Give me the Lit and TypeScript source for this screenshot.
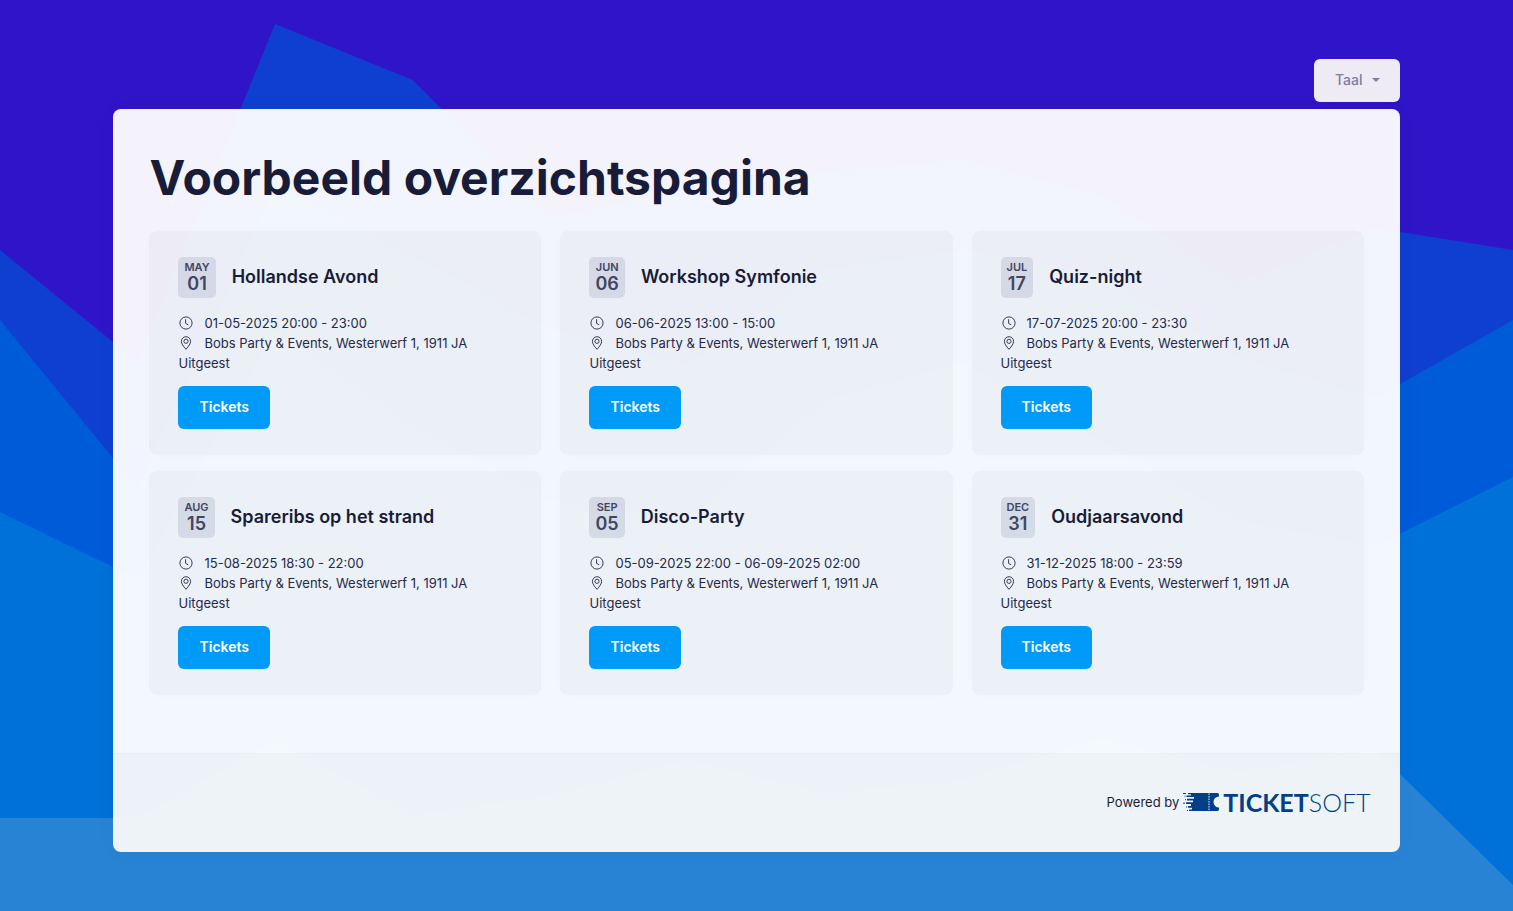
import { LitElement, html, css, svg } from "lit";
import { customElement, property } from "lit/decorators.js";

interface TicketEvent {
  month: string;
  day: string;
  title: string;
  time: string;
}

const LOCATION = "Bobs Party & Events, Westerwerf 1, 1911 JA Uitgeest";

const EVENTS: TicketEvent[] = [
  { month: "MAY", day: "01", title: "Hollandse Avond", time: "01-05-2025 20:00 - 23:00" },
  { month: "JUN", day: "06", title: "Workshop Symfonie", time: "06-06-2025 13:00 - 15:00" },
  { month: "JUL", day: "17", title: "Quiz-night", time: "17-07-2025 20:00 - 23:30" },
  { month: "AUG", day: "15", title: "Spareribs op het strand", time: "15-08-2025 18:30 - 22:00" },
  { month: "SEP", day: "05", title: "Disco-Party", time: "05-09-2025 22:00 - 06-09-2025 02:00" },
  { month: "DEC", day: "31", title: "Oudjaarsavond", time: "31-12-2025 18:00 - 23:59" },
];

// Height of each mountain layer at twelve evenly spaced columns.
const PEAKS: { fill: string; ys: number[] }[] = [
  { fill: "#0f3fd0", ys: [250, 362, 24, 80, 217, 190, 172, 160, 195, 283, 228, 250] },
  { fill: "#005bd8", ys: [320, 488, 185, 255, 330, 365, 270, 250, 275, 357, 398, 320] },
  { fill: "#0071d8", ys: [512, 579, 330, 425, 500, 520, 400, 362, 440, 520, 546, 477] },
  { fill: "#2983d4", ys: [818, 818, 740, 815, 795, 760, 793, 780, 738, 772, 750, 885] },
];

@customElement("event-card")
export class EventCard extends LitElement {
  @property({ attribute: false }) event!: TicketEvent;

  static styles = css`
    :host {
      display: block;
      padding: 26px 29px;
      border-radius: 8px;
      background: rgba(24, 20, 20, 0.03);
      box-shadow: 0 0 20px rgba(24, 28, 56, 0.01);
    }
    .head {
      display: flex;
      align-items: center;
      gap: 16px;
      margin-bottom: 15px;
    }
    .date {
      display: flex;
      flex-direction: column;
      align-items: center;
      height: 41px;
      box-sizing: border-box;
      padding: 3px 6px 0;
      border-radius: 5px;
      background: rgba(24, 28, 90, 0.1);
      color: #414560;
      font-weight: 600;
    }
    .month {
      font-size: 11px;
      line-height: 15px;
    }
    .day {
      font-size: 18px;
      line-height: 18px;
    }
    .title {
      margin: 0;
      padding-bottom: 2px;
      font-size: 18px;
      line-height: 24px;
      font-weight: 600;
      color: #181c38;
    }
    .line {
      margin: 0;
      font-size: 13px;
      line-height: 20px;
      color: #25294a;
    }
    .icon {
      width: 16px;
      height: 14px;
      margin-right: 10px;
      vertical-align: -2px;
      stroke-width: 0.9;
    }
    .tickets {
      display: inline-block;
      margin-top: 13px;
      padding: 0 21px 1px;
      border-radius: 6px;
      background: #009bf8;
      color: #fff;
      font-size: 14px;
      line-height: 42px;
      font-weight: 600;
      text-decoration: none;
      vertical-align: top;
    }
  `;

  render() {
    const e = this.event;
    return html`
      <div class="head">
        <div class="date"><span class="month">${e.month}</span><span class="day">${e.day}</span></div>
        <h2 class="title">${e.title}</h2>
      </div>
      <p class="line"><svg class="icon" viewBox="0 0 16 14" fill="none" stroke="currentColor" aria-hidden="true"><circle cx="8" cy="7" r="6.1" /><path d="M7.6 3.2v4.2l2.6 1.4" /></svg>${e.time}</p>
      <p class="line"><svg class="icon" viewBox="0 0 16 14" fill="none" stroke="currentColor" aria-hidden="true"><path d="M8 13.3C5.2 10.2 3.4 7.6 3.4 5.3a4.6 4.6 0 0 1 9.2 0C12.6 7.6 10.8 10.2 8 13.3z" /><circle cx="8" cy="5.3" r="2.1" /></svg>${LOCATION}</p>
      <a class="tickets" href="#tickets">Tickets</a>
    `;
  }
}

@customElement("app-root")
export class AppRoot extends LitElement {
  static styles = css`
    :host {
      display: block;
      position: relative;
      min-height: 100vh;
      box-sizing: border-box;
      padding: 59px 0;
      background: #3015c8;
      font-family: Inter, "Noto Sans", sans-serif;
      color: #181c38;
    }
    .backdrop {
      position: absolute;
      inset: 0;
      width: 100%;
      height: 100%;
    }
    .page {
      position: relative;
      width: 85%;
      margin: 0 auto;
    }
    .toolbar {
      display: flex;
      justify-content: flex-end;
      margin-bottom: 7px;
    }
    .language {
      display: flex;
      align-items: center;
      gap: 9px;
      height: 43px;
      padding: 0 20px 2px 21px;
      border: 0;
      border-radius: 6px;
      background: #eeebf5;
      color: #7e7e9e;
      font: 500 14px/20px Inter, sans-serif;
    }
    .caret {
      border: 4px solid transparent;
      border-top-color: currentColor;
      border-bottom: 0;
    }
    .panel {
      overflow: hidden;
      border-radius: 8px;
      background: rgba(255, 255, 255, 0.95);
      box-shadow: 0 0 20px rgba(24, 28, 56, 0.03);
    }
    .content {
      padding: 36px 36px 58px;
    }
    .heading {
      margin: 0 0 20px;
      font-size: 48px;
      line-height: 66px;
      font-weight: 700;
    }
    .grid {
      display: grid;
      grid-template-columns: repeat(3, minmax(0, 1fr));
      gap: 16px 19px;
    }
    .footer {
      display: flex;
      justify-content: flex-end;
      align-items: center;
      gap: 4px;
      height: 99px;
      box-sizing: border-box;
      padding: 0 29px 2px;
      border-top: 1px solid rgba(24, 28, 56, 0.02);
      background: rgba(24, 24, 24, 0.028);
      font-size: 13px;
    }
    .brand {
      display: flex;
      align-items: center;
      color: #023f88;
      text-decoration: none;
      font-family: Lato, sans-serif;
      font-size: 25px;
      line-height: 26px;
    }
    .mark {
      width: 37px;
      height: 20px;
      margin-right: 3px;
    }
    .strong {
      font-weight: 700;
    }
    .light {
      font-weight: 300;
    }
  `;

  render() {
    return html`
      <svg class="backdrop" viewBox="0 0 1513 911" preserveAspectRatio="none" aria-hidden="true">
        ${PEAKS.map(({ fill, ys }) => {
          const top = ys.map((y, i) => `${((i * 1513) / 11).toFixed(1)},${y}`).join(" ");
          return svg`<polygon fill=${fill} points=${`${top} 1513,911 0,911`} />`;
        })}
      </svg>
      <div class="page">
        <div class="toolbar">
          <button class="language" type="button" aria-haspopup="true">Taal<span class="caret"></span></button>
        </div>
        <div class="panel">
          <main class="content">
            <h1 class="heading">Voorbeeld overzichtspagina</h1>
            <div class="grid">${EVENTS.map((e) => html`<event-card .event=${e}></event-card>`)}</div>
          </main>
          <footer class="footer">
            <span>Powered by</span>
            <a class="brand" href="#ticketsoft">
              <svg class="mark" viewBox="0 0 37 20" aria-hidden="true">
                <path fill="currentColor" d="M5 1H34.5Q36 1 36 3V4.500A5.500 5.500 0 0 0 36 15.500V17Q36 19 34.500 19H6V17.500H9V15.800H5V14H8V12H3V10.300H10V8.500H4V6.800H11V5H3.500V3.500H8V2.300H5Z" />
                <path stroke="currentColor" stroke-width="1" d="M0 1.500h3M1.500 4.200h1M2 7.700h1M0 11.200h2M3 15h1M4 18.500h1" />
                <path stroke="#edf2f6" stroke-width="1" stroke-dasharray="1.500 1" d="M26 1.500v17.500" />
              </svg>
              <span class="strong">TICKET</span><span class="light">SOFT</span>
            </a>
          </footer>
        </div>
      </div>
    `;
  }
}
